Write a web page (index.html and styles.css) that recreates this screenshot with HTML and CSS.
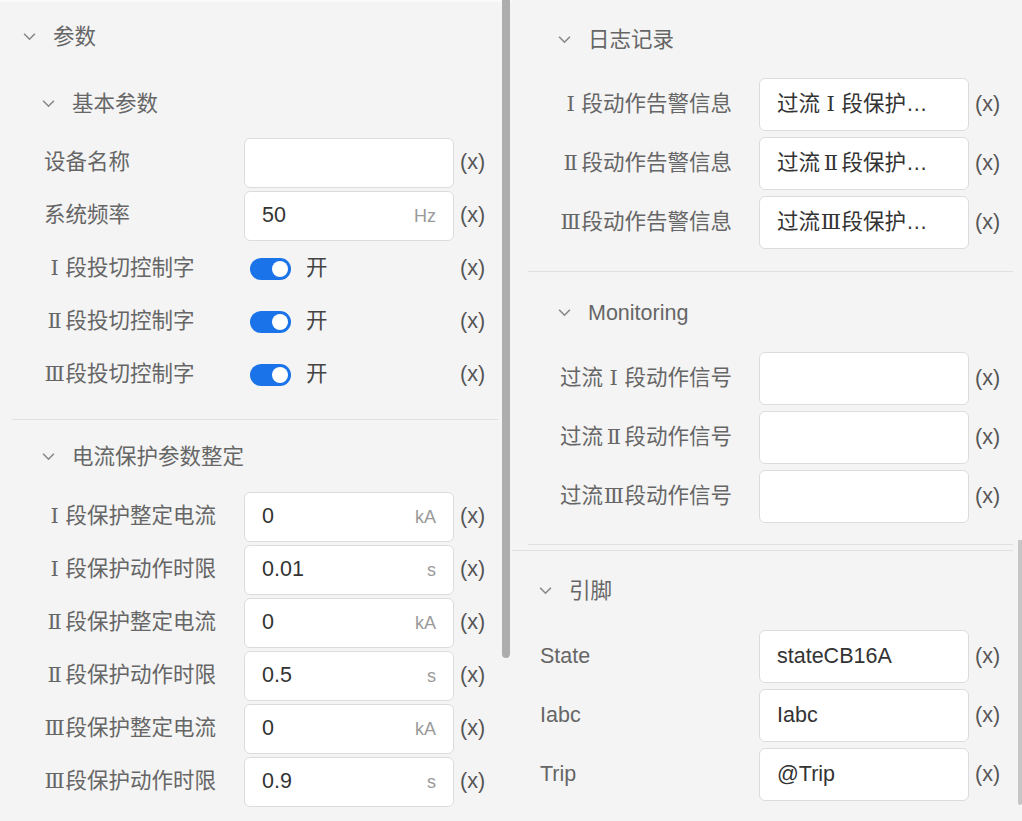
FILE: index.html
```html
<!DOCTYPE html>
<html lang="zh-CN">
<head>
<meta charset="utf-8">
<title>参数</title>
<link rel="stylesheet" href="styles.css">
</head>
<body>
<div class="app">
  <div class="panel panel-left">
    <section class="group l1 left-root">
      <div class="hdr hdr-l1">
        <svg class="chev" viewBox="0 0 16 10"><polyline points="2,2 8,8 14,2"/></svg>
        <span>参数</span>
      </div>

      <section class="group l2 sep first-left">
        <div class="hdr hdr-l2">
          <svg class="chev" viewBox="0 0 16 10"><polyline points="2,2 8,8 14,2"/></svg>
          <span>基本参数</span>
        </div>
        <div class="rows tight">
          <div class="row"><span class="lbl">设备名称</span><div class="field"></div><span class="x">(x)</span></div>
          <div class="row"><span class="lbl">系统频率</span><div class="field"><span class="val">50</span><span class="unit">Hz</span></div><span class="x">(x)</span></div>
          <div class="row"><span class="lbl"><span class="rn">Ⅰ</span>段投切控制字</span><div class="sw"><span class="toggle"><span class="knob"></span></span><span class="on">开</span></div><span class="x">(x)</span></div>
          <div class="row"><span class="lbl"><span class="rn">Ⅱ</span>段投切控制字</span><div class="sw"><span class="toggle"><span class="knob"></span></span><span class="on">开</span></div><span class="x">(x)</span></div>
          <div class="row"><span class="lbl"><span class="rn">Ⅲ</span>段投切控制字</span><div class="sw"><span class="toggle"><span class="knob"></span></span><span class="on">开</span></div><span class="x">(x)</span></div>
        </div>
      </section>

      <section class="group l2 second-left">
        <div class="hdr hdr-l2">
          <svg class="chev" viewBox="0 0 16 10"><polyline points="2,2 8,8 14,2"/></svg>
          <span>电流保护参数整定</span>
        </div>
        <div class="rows tight r2">
          <div class="row"><span class="lbl"><span class="rn">Ⅰ</span>段保护整定电流</span><div class="field"><span class="val">0</span><span class="unit">kA</span></div><span class="x">(x)</span></div>
          <div class="row"><span class="lbl"><span class="rn">Ⅰ</span>段保护动作时限</span><div class="field"><span class="val">0.01</span><span class="unit">s</span></div><span class="x">(x)</span></div>
          <div class="row"><span class="lbl"><span class="rn">Ⅱ</span>段保护整定电流</span><div class="field"><span class="val">0</span><span class="unit">kA</span></div><span class="x">(x)</span></div>
          <div class="row"><span class="lbl"><span class="rn">Ⅱ</span>段保护动作时限</span><div class="field"><span class="val">0.5</span><span class="unit">s</span></div><span class="x">(x)</span></div>
          <div class="row"><span class="lbl"><span class="rn">Ⅲ</span>段保护整定电流</span><div class="field"><span class="val">0</span><span class="unit">kA</span></div><span class="x">(x)</span></div>
          <div class="row"><span class="lbl"><span class="rn">Ⅲ</span>段保护动作时限</span><div class="field"><span class="val">0.9</span><span class="unit">s</span></div><span class="x">(x)</span></div>
        </div>
      </section>
    </section>
  </div>

  <div class="panel panel-right">
    <section class="group l1 right-root sep">
      <section class="group l2 sep log">
        <div class="hdr hdr-l2">
          <svg class="chev" viewBox="0 0 16 10"><polyline points="2,2 8,8 14,2"/></svg>
          <span>日志记录</span>
        </div>
        <div class="rows wide">
          <div class="row"><span class="lbl"><span class="rn">Ⅰ</span>段动作告警信息</span><div class="field"><span class="val">过流<span class="rn">Ⅰ</span>段保护…</span></div><span class="x">(x)</span></div>
          <div class="row"><span class="lbl"><span class="rn">Ⅱ</span>段动作告警信息</span><div class="field"><span class="val">过流<span class="rn">Ⅱ</span>段保护…</span></div><span class="x">(x)</span></div>
          <div class="row"><span class="lbl"><span class="rn">Ⅲ</span>段动作告警信息</span><div class="field"><span class="val">过流<span class="rn">Ⅲ</span>段保护…</span></div><span class="x">(x)</span></div>
        </div>
      </section>
      <section class="group l2 sep mon">
        <div class="hdr hdr-l2">
          <svg class="chev" viewBox="0 0 16 10"><polyline points="2,2 8,8 14,2"/></svg>
          <span>Monitoring</span>
        </div>
        <div class="rows wide">
          <div class="row"><span class="lbl">过流<span class="rn">Ⅰ</span>段动作信号</span><div class="field"></div><span class="x">(x)</span></div>
          <div class="row"><span class="lbl">过流<span class="rn">Ⅱ</span>段动作信号</span><div class="field"></div><span class="x">(x)</span></div>
          <div class="row"><span class="lbl">过流<span class="rn">Ⅲ</span>段动作信号</span><div class="field"></div><span class="x">(x)</span></div>
        </div>
      </section>
    </section>

    <section class="group l1 pins">
      <div class="hdr hdr-l1r">
        <svg class="chev" viewBox="0 0 16 10"><polyline points="2,2 8,8 14,2"/></svg>
        <span>引脚</span>
      </div>
      <div class="rows wide">
        <div class="row r-l1"><span class="lbl">State</span><div class="field"><span class="val">stateCB16A</span></div><span class="x">(x)</span></div>
        <div class="row r-l1"><span class="lbl">Iabc</span><div class="field"><span class="val">Iabc</span></div><span class="x">(x)</span></div>
        <div class="row r-l1"><span class="lbl">Trip</span><div class="field"><span class="val">@Trip</span></div><span class="x">(x)</span></div>
      </div>
    </section>
  </div>

  <div class="scroll-thumb left-thumb"></div>
  <div class="scroll-thumb right-thumb"></div>
</div>
</body>
</html>
```

FILE: styles.css
```css
* { box-sizing: border-box; }

html, body {
  margin: 0;
  padding: 0;
  background: #f4f4f4;
}

body {
  font-family: "Liberation Sans", "Noto Sans CJK SC", sans-serif;
  font-size: 21.5px;
  color: #666;
}

.app {
  position: relative;
  width: 1022px;
  height: 821px;
  overflow: hidden;
  display: flex;
  background: #f4f4f4;
}

.panel {
  flex: none;
  height: 821px;
  overflow: hidden;
}

.panel-left {
  width: 512px;
  border-top: 2px solid #fafafa;
}

.panel-right {
  width: 510px;
}

/* full-width roman numerals with serifs, as in the CJK UI font */
.rn {
  display: inline-block;
  width: 21.5px;
  text-align: center;
  font-family: "DejaVu Serif", "Noto Sans CJK SC", serif;
  font-size: 21px;
  line-height: 1;
  vertical-align: baseline;
}

/* headers */
.hdr {
  height: 44px;
  display: flex;
  align-items: center;
  color: #666;
  line-height: 1;
  padding-top: 3px;
}

.chev {
  width: 15px;
  height: 9px;
  flex: none;
  margin-right: 16px;
  margin-top: -2px;
}

.chev polyline {
  fill: none;
  stroke: #888;
  stroke-width: 1.8;
}

.hdr-l1 { padding-left: 22px; }
.hdr-l2 { padding-left: 29px; }
.hdr-l1r { padding-left: 26px; }

/* groups */
.left-root { padding-top: 12px; }

.l2.first-left {
  margin: 23px 14px 0 12px;
  padding-bottom: 19px;
}

.l2.second-left {
  margin: 14px 14px 0 12px;
}

.sep { border-bottom: 1px solid #e0e0e0; }

.right-root {
  margin-right: 9px;
  padding-bottom: 5px;
}

.l2.log {
  margin: 0 0 0 16px;
  padding-top: 17px;
  padding-bottom: 22px;
}

.l2.mon {
  margin: 0 0 0 16px;
  padding-top: 18px;
  padding-bottom: 21px;
}

.pins {
  margin-right: 9px;
  padding-top: 17px;
}

/* rows */
.rows {
  display: flex;
  flex-direction: column;
}

.rows.tight { padding-top: 13px; gap: 3px; }
.rows.tight.r2 { padding-top: 14px; }
.rows.tight .row { height: 50px; }

.rows.wide { padding-top: 17px; gap: 6px; }
.mon .rows.wide, .pins .rows.wide { padding-top: 18px; }
.rows.wide .row { height: 53px; }

.row {
  display: flex;
  align-items: center;
  padding-left: 32px;
  padding-right: 11px;
}

.row.r-l1 { padding-left: 28px; }

.lbl {
  flex: 1;
  min-width: 0;
  white-space: nowrap;
  color: #666;
  line-height: 1;
}

.field {
  flex: none;
  width: 210px;
  height: 100%;
  background: #fff;
  border: 1px solid #dcdcdc;
  border-radius: 6px;
  padding: 0 17px;
  display: flex;
  align-items: center;
  justify-content: space-between;
  overflow: hidden;
}

.val {
  color: #333;
  white-space: nowrap;
  line-height: 1.2;
}

.unit {
  color: #9a9a9a;
  font-size: 18px;
}

.x {
  flex: none;
  width: 27px;
  margin-left: 6px;
  color: #555;
  white-space: nowrap;
  line-height: 1;
}

/* switch */
.sw {
  flex: none;
  width: 210px;
  height: 100%;
  display: flex;
  align-items: center;
  padding-left: 6px;
}

.toggle {
  position: relative;
  width: 41px;
  height: 22px;
  border-radius: 11px;
  background: #1a73e8;
  flex: none;
}

.knob {
  position: absolute;
  right: 3px;
  top: 3px;
  width: 16px;
  height: 16px;
  border-radius: 50%;
  background: #fff;
}

.on {
  margin-left: 15px;
  color: #444;
  line-height: 1;
}

/* scrollbars (overlay) */
.scroll-thumb {
  position: absolute;
  background: #adadad;
}

.left-thumb {
  left: 502px;
  top: 0;
  width: 8px;
  height: 658px;
  border-radius: 0 0 4px 4px;
}

.right-thumb {
  left: 1018px;
  top: 540px;
  width: 4px;
  height: 265px;
  background: #c6c6c6;
  border-radius: 0 0 2px 2px;
}
```
